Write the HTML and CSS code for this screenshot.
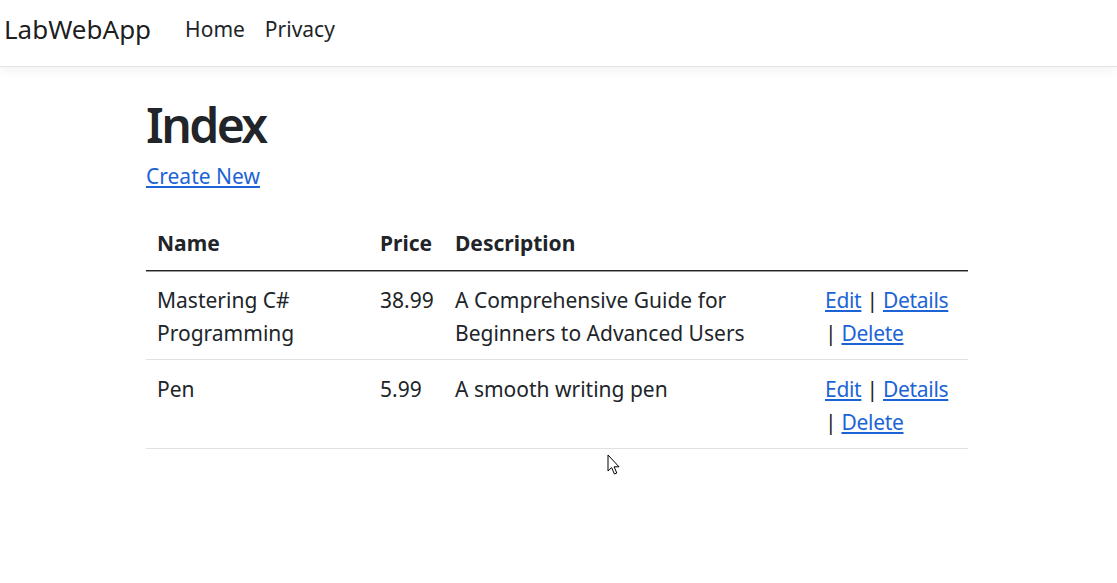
FILE: index.html
```html
<!DOCTYPE html>
<html lang="en">
<head>
<meta charset="utf-8">
<title>Index - LabWebApp</title>
<link rel="stylesheet" href="styles.css">
</head>
<body>
<header class="navbar">
  <a class="brand" href="#">LabWebApp</a>
  <nav class="nav">
    <a class="nav-link" href="#">Home</a>
    <a class="nav-link" href="#">Privacy</a>
  </nav>
</header>
<main class="container">
  <h1 class="title">Index</h1>
  <p class="create"><a href="#">Create New</a></p>
  <table class="table">
    <colgroup>
      <col class="c-name"><col class="c-price"><col class="c-desc"><col class="c-act">
    </colgroup>
    <thead>
      <tr><th>Name</th><th>Price</th><th>Description</th><th></th></tr>
    </thead>
    <tbody>
      <tr>
        <td>Mastering C# Programming</td>
        <td>38.99</td>
        <td>A Comprehensive Guide for Beginners to Advanced Users</td>
        <td><a href="#">Edit</a> | <a href="#">Details</a> | <a href="#">Delete</a></td>
      </tr>
      <tr>
        <td>Pen</td>
        <td>5.99</td>
        <td>A smooth writing pen</td>
        <td><a href="#">Edit</a> | <a href="#">Details</a> | <a href="#">Delete</a></td>
      </tr>
    </tbody>
  </table>
</main>
<svg class="cursor" width="14" height="22" viewBox="0 0 14 22"><path d="M1 1 L1 17 L4.6 13.6 L7.4 20 L9.8 19 L7.1 12.8 L12 12.8 Z" fill="#fff" stroke="#000" stroke-width="1" stroke-linejoin="round"/></svg>
</body>
</html>
```
FILE: styles.css
```css
html, body {
  margin: 0;
  padding: 0;
  background: #fff;
}
body {
  font-family: "Noto Sans", "Open Sans", sans-serif;
  font-size: 21px;
  line-height: 33px;
  color: #212529;
  position: relative;
  min-height: 583px;
}
a {
  color: #1c64d6;
  text-decoration: underline;
  text-underline-offset: 2px;
}
.navbar {
  height: 58px;
  padding: 0 0 8px 4px;
  border-bottom: 1px solid #e2e2e2;
  box-shadow: 0 4px 10px rgba(0, 0, 0, 0.05);
  display: flex;
  align-items: center;
  box-sizing: content-box;
}
.brand {
  font-size: 26px;
  color: rgba(0, 0, 0, 0.9);
  text-decoration: none;
  margin-right: 24px;
}
.nav {
  display: flex;
}
.nav-link {
  color: #212529;
  text-decoration: none;
  padding: 0 10px;
}
.container {
  width: 822px;
  margin-left: 146px;
}
.title {
  font-size: 48px;
  font-weight: 600;
  line-height: 64px;
  margin: 26px 0 3px;
  letter-spacing: -2.6px;
}
.create {
  margin: 0 0 22px;
}
.table {
  width: 822px;
  border-collapse: collapse;
  table-layout: fixed;
}
.c-name { width: 223px; }
.c-price { width: 75px; }
.c-desc { width: 370px; }
.c-act { width: 154px; }
.table th, .table td {
  padding: 13px 11px 9px;
  text-align: left;
  vertical-align: top;
  border-bottom: 1px solid #dee2e6;
}
.table td:last-child {
  letter-spacing: -0.3px;
}
.table th {
  padding: 12px 11px 10px;
  font-weight: 700;
  border-bottom: 1px solid #212529;
  box-shadow: 0 1px 0 #9a9a9a;
}
.cursor {
  position: absolute;
  left: 607px;
  top: 454px;
}
```
